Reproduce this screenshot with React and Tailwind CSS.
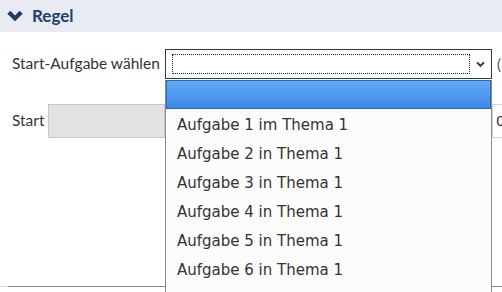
import React from "react";

const items = [
  "Aufgabe 1 im Thema 1",
  "Aufgabe 2 in Thema 1",
  "Aufgabe 3 in Thema 1",
  "Aufgabe 4 in Thema 1",
  "Aufgabe 5 in Thema 1",
  "Aufgabe 6 in Thema 1",
];

function Chevron({ className, width = 3.6 }) {
  return (
    <svg viewBox="0 0 16 12" className={className}>
      <path d="M1.8 2.2 L8 8.4 L14.2 2.2" fill="none" stroke="currentColor" strokeWidth={width} strokeLinejoin="miter" />
    </svg>
  );
}

export default function App() {
  return (
    <div className="relative w-[502px] h-[292px] overflow-hidden bg-white font-['Lato',sans-serif] text-[#333]">
      <div className="h-[32px] bg-[#e8ebf2] flex items-center pl-[7px] gap-[9px]">
        <Chevron className="w-[16px] h-[12px] text-[#1d3b66]" width={4.2} />
        <span className="text-[17px] font-bold text-[#20406c]">Regel</span>
      </div>

      <div className="flex items-center pl-[12px] pt-[17px]">
        <span className="w-[153px] shrink-0 text-[15.5px]">Start-Aufgabe wählen</span>
        <div className="w-[327px] shrink-0 h-[30px] border border-[#2b3a4a] bg-white flex items-center px-[6px] gap-[6px]">
          <div className="flex-1 h-[20px] border border-dotted border-[#222]"></div>
          <Chevron className="w-[9px] h-[7px] text-[#2b3a4a]" />
        </div>
        <span className="ml-[5px] shrink-0 text-[15px] text-[#555]">(</span>
      </div>

      <div className="flex items-center pl-[12px] pt-[25px]">
        <span className="w-[36px] shrink-0 text-[15.5px]">Start</span>
        <div className="w-[117px] shrink-0 h-[34px] bg-[#e3e3e3] border border-[#c8c8c8]"></div>
        <div className="ml-[327px] w-[20px] shrink-0 h-[34px] border-y border-l border-[#d6d6d6] flex items-center pl-[3px] text-[14px] font-['DejaVu_Sans',sans-serif]">0</div>
      </div>

      <div className="absolute left-0 right-0 top-[286px] flex">
        <div className="w-[8px] h-px bg-[#d8d8d8]"></div>
        <div className="flex-1 h-px bg-[#888]"></div>
      </div>

      <div className="absolute left-[165px] top-[80px] w-[327px] h-[220px] bg-[#fcfcfc] border-x border-[#8a8a8a] font-['DejaVu_Sans',sans-serif]">
        <div className="h-[29px] border border-[#2a6bb8] bg-gradient-to-b from-[#62abf6] to-[#3a8ae6]"></div>
        <div className="pt-[2px]">
          {items.map((t) => (
            <div key={t} className="h-[29px] flex items-center pl-[11px] text-[15px] text-[#333]">
              {t}
            </div>
          ))}
        </div>
      </div>
    </div>
  );
}
